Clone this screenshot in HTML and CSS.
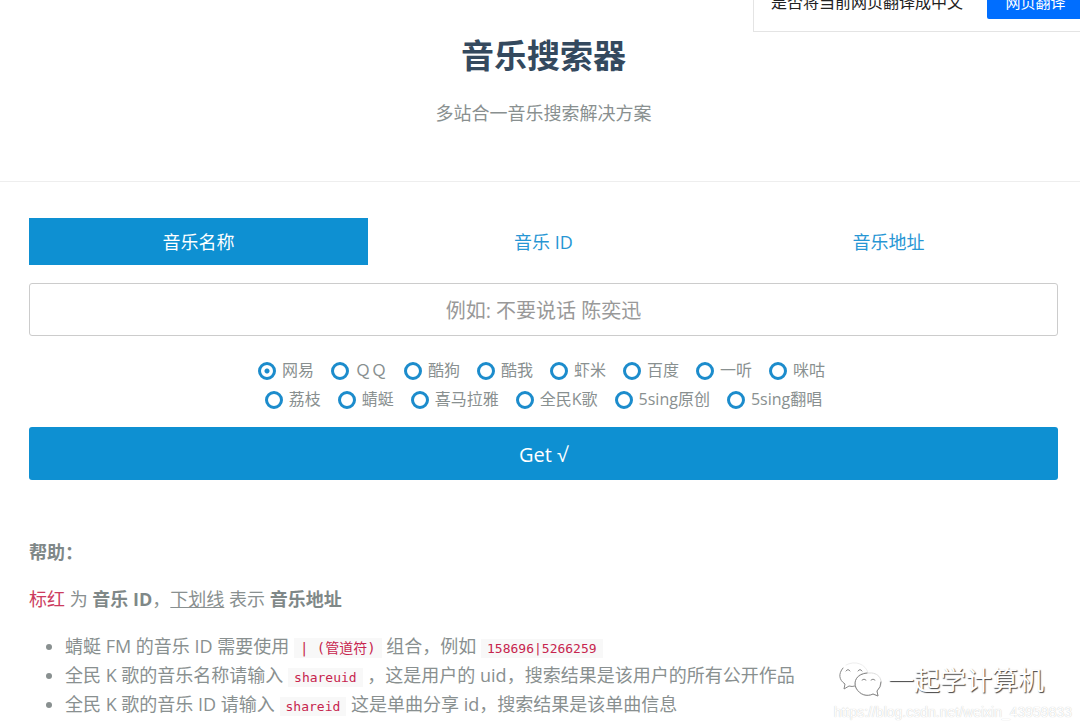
FILE: index.html
```html
<!DOCTYPE html>
<html lang="zh-CN">
<head>
<meta charset="utf-8">
<title>音乐搜索器</title>
<link rel="stylesheet" href="styles.css">
</head>
<body>
<aside class="translate">
  <span>是否将当前网页翻译成中文</span>
  <button type="button" class="translate-btn">网页翻译</button>
</aside>
<header class="header">
  <h1 class="title">音乐搜索器</h1>
  <p class="lead">多站合一音乐搜索解决方案</p>
</header>
<main class="main">
  <form class="search">
    <nav class="tabs">
      <a href="#name" class="tab tab-active">音乐名称</a>
      <a href="#id" class="tab">音乐 ID</a>
      <a href="#url" class="tab">音乐地址</a>
    </nav>
    <input class="query" type="text" aria-label="音乐名称" placeholder="例如: 不要说话 陈奕迅">
    <div class="sources">
      <div class="source-row source-row-first">
        <label class="source"><input type="radio" name="source" checked>网易</label>
        <label class="source"><input type="radio" name="source">ＱＱ</label>
        <label class="source"><input type="radio" name="source">酷狗</label>
        <label class="source"><input type="radio" name="source">酷我</label>
        <label class="source"><input type="radio" name="source">虾米</label>
        <label class="source"><input type="radio" name="source">百度</label>
        <label class="source"><input type="radio" name="source">一听</label>
        <label class="source"><input type="radio" name="source">咪咕</label>
      </div>
      <div class="source-row">
        <label class="source"><input type="radio" name="source">荔枝</label>
        <label class="source"><input type="radio" name="source">蜻蜓</label>
        <label class="source"><input type="radio" name="source">喜马拉雅</label>
        <label class="source"><input type="radio" name="source">全民K歌</label>
        <label class="source"><input type="radio" name="source">5sing原创</label>
        <label class="source"><input type="radio" name="source">5sing翻唱</label>
      </div>
    </div>
    <button type="submit" class="submit">Get √</button>
  </form>
  <section class="help">
    <p><b>帮助：</b></p>
    <p><span class="red">标红</span> 为 <b>音乐 ID</b>，<u>下划线</u> 表示 <b>音乐地址</b></p>
    <ul class="tips">
      <li>蜻蜓 FM 的音乐 ID 需要使用 <code class="code-cjk">| (管道符)</code> 组合，例如 <code>158696|5266259</code></li>
      <li>全民 K 歌的音乐名称请输入 <code>shareuid</code> ，这是用户的 uid，搜索结果是该用户的所有公开作品</li>
      <li>全民 K 歌的音乐 ID 请输入 <code>shareid</code> 这是单曲分享 id，搜索结果是该单曲信息</li>
    </ul>
  </section>
</main>
<div class="watermark">
  <div class="brand">
    <svg class="brand-icon" width="44" height="38" viewBox="0 0 44 38" fill="none" stroke-linecap="round" stroke-linejoin="round">
      <path d="M7 4C16 -1 27 3 29 12" stroke="#eee"/>
      <path d="M4 7C-1 13 0 19 6 23L5 28L10 25Q13 26 16 25" stroke="#888"/>
      <path d="M7 10Q9 7 11 10M19 10Q21 7 23 10" stroke="#888"/>
      <path d="M29 12C19 11 14 19 17 27C20 34 28 36 34 33L39 35L38 30C45 24 43 13 33 12Z" fill="#fff" stroke="#ddd"/>
      <path d="M28 12C18 13 14 20 17 27C21 34 28 36 34 33L39 35L38 30Q42 26 42 21" stroke="#888"/>
      <path d="M23 19Q25 17 27 19M32 19Q34 17 36 19" stroke="#888"/>
    </svg>
    <span>一起学计算机</span>
  </div>
  <div class="source-url">https://blog.csdn.net/weixin_43959833</div>
</div>
</body>
</html>
```
FILE: styles.css
```css
* { box-sizing: border-box; }
body {
  margin: 0;
  background: #fff;
  color: #899090;
  font-family: "Open Sans", "Noto Sans CJK SC", sans-serif;
  font-size: 18px;
  font-weight: 400;
  line-height: 29px;
}
p, h1 { margin: 0; }
b { color: #7f8888; font-weight: 700; }
button, input { font: inherit; }

.translate {
  position: absolute;
  top: -24px;
  right: 0;
  display: flex;
  align-items: center;
  gap: 24px;
  height: 56px;
  padding: 0 0 3px 17px;
  border: 1px solid #e4e4e4;
  border-right: 0;
  background: #fff;
  color: #222;
  font-size: 16px;
}
.translate-btn {
  width: 93px;
  height: 32px;
  padding: 0 0 0 4px;
  border: 0;
  border-radius: 2px 0 0 2px;
  background: #006eff;
  color: #fff;
  font-size: 15px;
}

.header {
  padding: 32px 22px 53px 29px;
  border-bottom: 1px solid #eee;
  text-align: center;
}
.title {
  margin-bottom: 19px;
  color: #34495e;
  font-size: 33px;
  font-weight: 700;
  line-height: 48px;
}

.main { padding: 36px 22px 8px 29px; }
.search {
  display: flex;
  flex-direction: column;
}
.tabs {
  display: grid;
  grid-template-columns: repeat(3, 1fr);
  gap: 6px;
  margin-bottom: 18px;
}
.tab {
  padding: 10px 9px 8px;
  color: #2796d4;
  text-align: center;
  text-decoration: none;
}
.tab-active {
  background: #0e90d2;
  color: #fff;
}
.query {
  width: 100%;
  height: 53px;
  padding: 2px 0 0;
  border: 1px solid #ccc;
  border-radius: 3px;
  background: #fff;
  color: #555;
  font-size: 20px;
  text-align: center;
}
.query::placeholder { color: #999; opacity: 1; }
.sources { margin: 20px 0 13px; font-size: 16px; }
.source-row {
  display: flex;
  flex-wrap: wrap;
  justify-content: center;
  gap: 0 17px;
}
.source-row-first { padding-right: 4px; }
.source {
  display: flex;
  align-items: center;
  gap: 6px;
}
.source input {
  width: 18px;
  height: 18px;
  margin: 0;
  appearance: none;
  border: 3px solid #1c8ccc;
  border-radius: 50%;
}
.source input:checked {
  background: radial-gradient(circle, #1c8ccc 2px, #fff 3px);
}
.submit {
  height: 53px;
  padding: 2px 0 0;
  border: 0;
  border-radius: 3px;
  background: #0e90d2;
  color: #fff;
  font-size: 20px;
}

.help { padding-top: 58px; }
.help p { margin-bottom: 18px; }
.red { color: #cc3c60; }
.tips { margin: 0; padding-left: 36px; }
code {
  padding: 2px 6px;
  background: #f8f8f8;
  color: #c7254e;
  font-family: "DejaVu Sans Mono", "Noto Sans CJK SC", monospace;
  font-size: 13px;
  line-height: 1;
}
.code-cjk { font-size: 14px; }

.watermark {
  position: absolute;
  top: 660px;
  right: 8px;
  display: flex;
  flex-direction: column;
  align-items: flex-end;
}
.brand {
  display: flex;
  align-items: center;
  gap: 5px;
  height: 40px;
  padding-right: 28px;
  color: #fff;
  font-size: 26px;
  text-shadow: 1px 1px 1px #444;
}
.source-url {
  color: #fff;
  font-family: "Liberation Sans", sans-serif;
  font-size: 14px;
  line-height: 24px;
  text-shadow: 0 0 1px #bbb;
}
```
